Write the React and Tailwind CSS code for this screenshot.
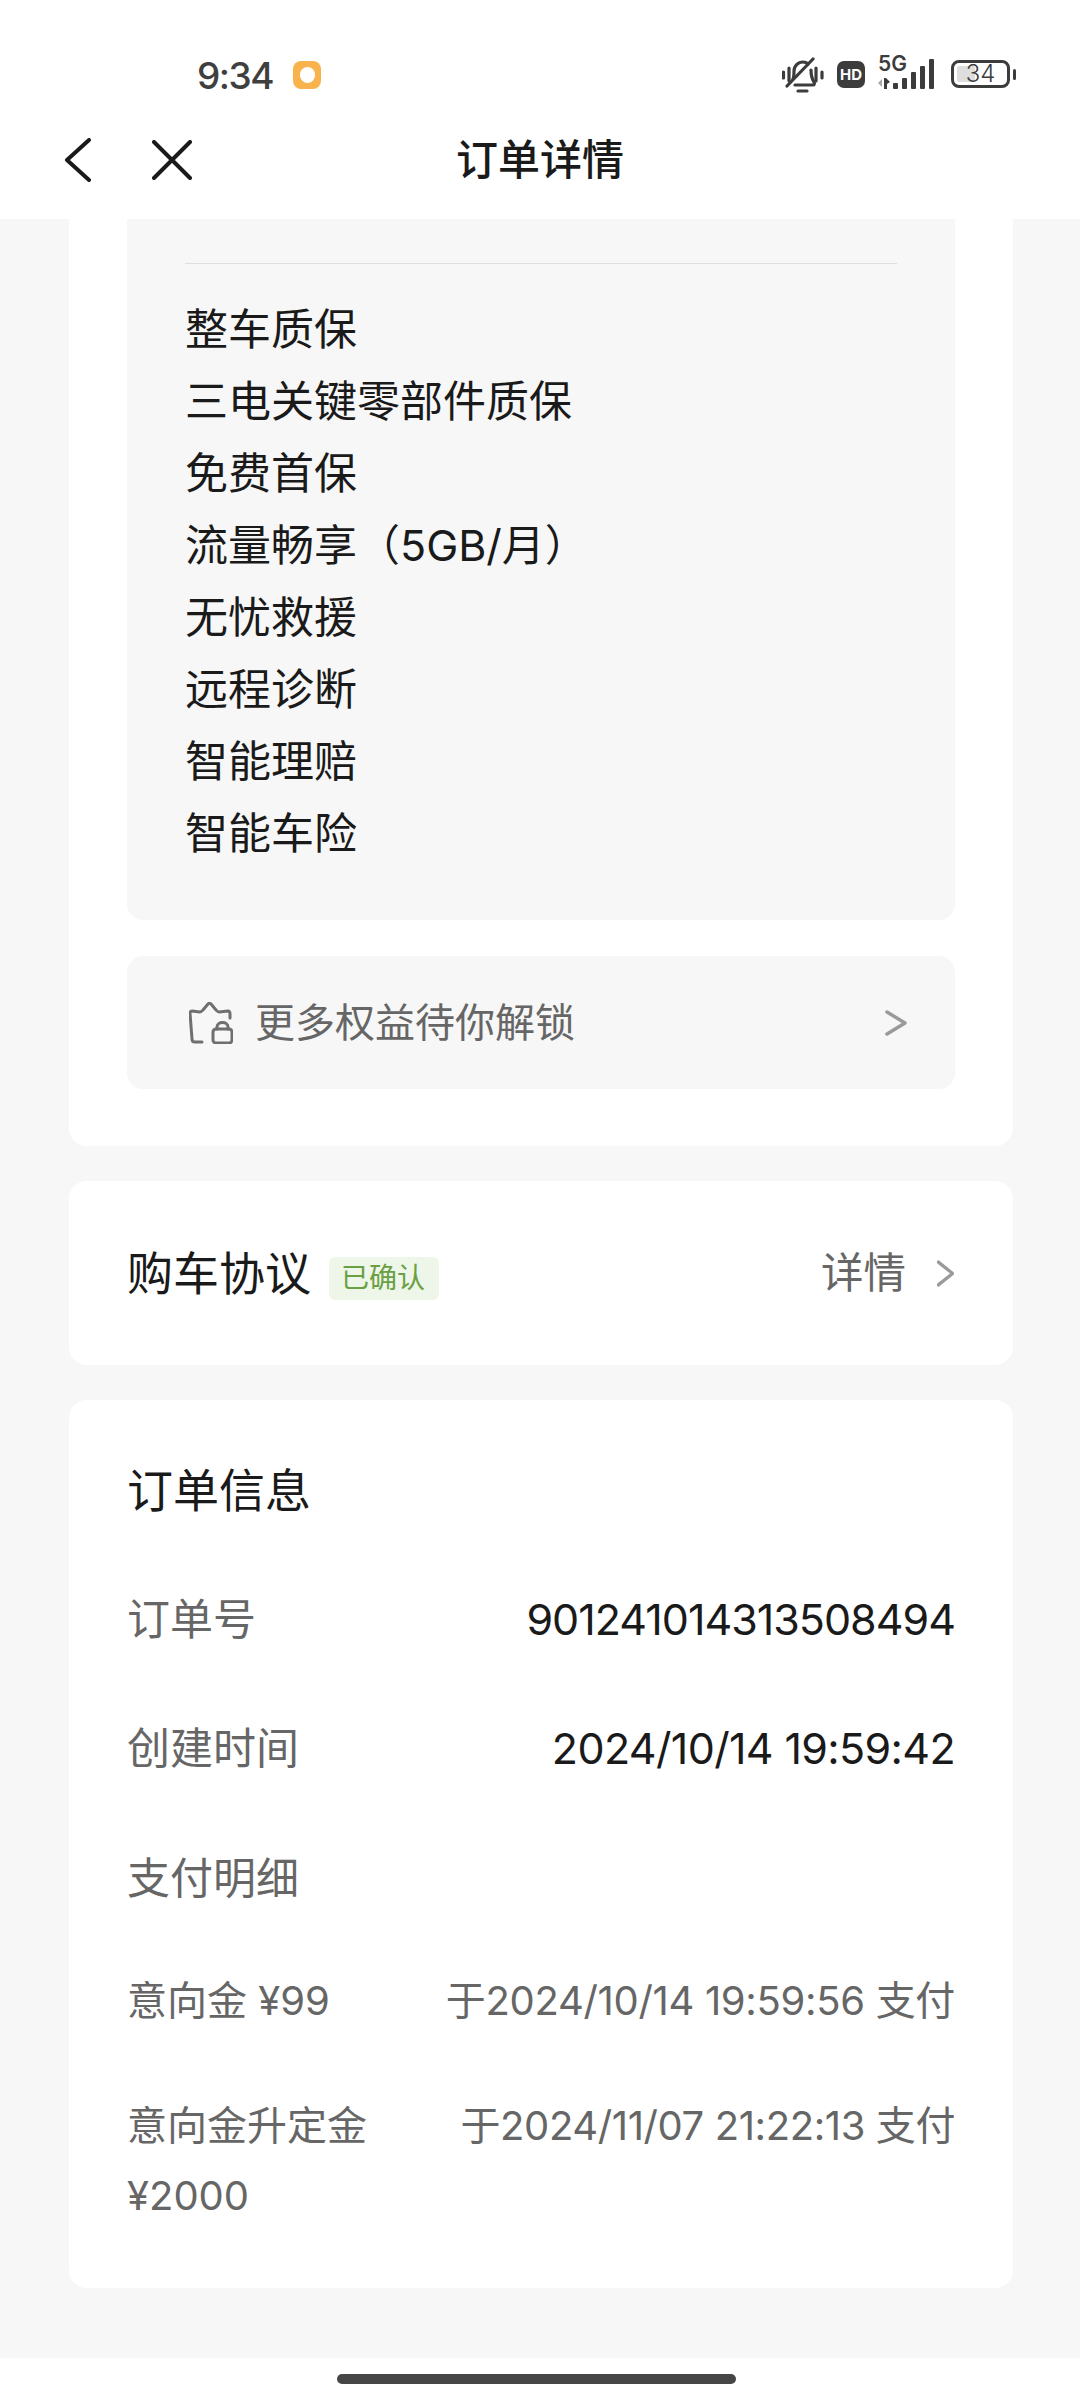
import React from 'react';

const benefits = ['整车质保', '三电关键零部件质保', '免费首保', '流量畅享（5GB/月）', '无忧救援', '远程诊断', '智能理赔', '智能车险'];

const BellOff = () => (
  <svg width="42" height="36" viewBox="0 0 42 36" fill="none" stroke="#3c3c3c" strokeWidth="3.200" strokeLinecap="round" strokeLinejoin="round">
    <path d="M1.500 15v6M7 11v13M34 11v13M40 15v6" />
    <path d="M11 22c1-2 1-5 1-8 0-5 4-9 9-9 2 0 4 1 5 2M29 13c0 5 1 9 3 12 1 2 0 3-1 3H13" />
    <path d="M31 2 5 29" />
    <path d="M16 34h9" />
  </svg>
);

const Signal = () => (
  <div className="w-[60px] h-[32px] relative">
    <span className="text-[21px] leading-[18px] font-semibold text-[#3c3c3c] absolute left-0 top-[-4px]">5G</span>
    <svg width="60" height="32" viewBox="0 0 60 32" fill="#3c3c3c">
      <path d="M0 24l4-4v8z" fill="#a8a8a8" />
      <path d="M6 19h2l4 4-3 2v5H6z" />
      <rect x="15" y="24" width="5" height="6" rx="1" />
      <rect x="24" y="19" width="5" height="11" rx="1" />
      <rect x="33" y="13" width="5" height="17" rx="1" />
      <rect x="42" y="7" width="5" height="23" rx="1" />
      <rect x="51" y="0" width="5" height="30" rx="1" />
    </svg>
  </div>
);

const Battery = () => (
  <div className="flex items-center gap-[3px]">
    <div className="w-[59px] h-[28px] rounded-[8px] border-[3px] border-[#3c3c3c] p-[3px] relative flex items-center">
      <div className="w-[18px] h-full bg-[#dedede] rounded-[2px]" />
      <span className="absolute inset-0 flex items-center justify-center text-[24px] leading-none text-[#3c3c3c] font-light">34</span>
    </div>
    <div className="w-[3px] h-[11px] bg-[#3c3c3c] rounded-full" />
  </div>
);

const Chevron = ({ className }) => (
  <svg className={className} viewBox="0 0 24 26" fill="none" stroke="#9a9a9a" strokeWidth="3.500" strokeLinecap="round" strokeLinejoin="round" preserveAspectRatio="none">
    <path d="M3 2l18 11L3 24" />
  </svg>
);

const InfoRow = ({ label, value, tracking }) => (
  <div className="flex justify-between text-[43px] leading-[72px]">
    <span className="text-[#666]">{label}</span>
    <span className={`text-[#1a1a1a] ${tracking}`}>{value}</span>
  </div>
);

export default function App() {
  return (
    <div className="w-[1080px] h-[2400px] flex flex-col bg-white overflow-hidden font-['Inter','Noto_Sans_CJK_SC',sans-serif]">
      {/* status bar + nav */}
      <header className="h-[219px] shrink-0 flex flex-col">
        <div className="h-[58px] mt-[57px] flex items-start justify-between pl-[197px] pr-[64px]">
          <div className="flex items-center h-[36px]">
            <span className="w-[96px] text-[37px] leading-none font-medium text-[#3f3f3f] tracking-[-1.5px]">9:34</span>
            <div className="w-[28px] h-[28px] rounded-[8px] bg-[#f9b34c] flex items-center justify-center">
              <div className="w-[15px] h-[16px] rounded-full bg-white" />
            </div>
          </div>
          <div className="flex items-start gap-[13px]">
            <BellOff />
            <div className="w-[28px] h-[27px] mt-[4px] rounded-[7px] bg-[#3c3c3c] text-white text-[15px] leading-[27px] font-bold text-center">HD</div>
            <div className="mt-[2px]"><Signal /></div>
            <div className="mt-[3px]"><Battery /></div>
          </div>
        </div>
        <nav className="relative flex items-center h-[50px] mt-[20px] pl-[64px]">
          <svg width="27" height="44" viewBox="0 0 27 44" fill="none" stroke="#1a1a1a" strokeWidth="4" strokeLinecap="round" strokeLinejoin="round">
            <path d="M25 2 3 22l22 20" />
          </svg>
          <svg className="ml-[61px]" width="40" height="40" viewBox="0 0 40 40" fill="none" stroke="#1a1a1a" strokeWidth="4" strokeLinecap="round">
            <path d="M2 2l36 36M38 2 2 38" />
          </svg>
          <h1 className="absolute inset-x-0 text-center text-[42px] leading-[50px] font-medium text-[#1a1a1a]">订单详情</h1>
        </nav>
      </header>

      <main className="flex-1 bg-[#f7f7f7] overflow-hidden">
        {/* benefits card, scrolled under the header */}
        <section className="ml-[69px] w-[944px] bg-white rounded-b-[18px] px-[58px] pb-[57px]">
          <div className="bg-[#f7f7f7] rounded-b-[16px] px-[58px] pt-[44px] pb-[51px]">
            <div className="h-px bg-[#dfdfdf] mb-[29px]" />
            <ul className="text-[43px] leading-[72px] text-[#1a1a1a]">
              {benefits.map((b) => (
                <li key={b}>{b}</li>
              ))}
            </ul>
          </div>
          <div className="mt-[36px] h-[133px] bg-[#f7f7f7] rounded-[16px] flex items-center pl-[62px] pr-[47px]">
            <svg width="44" height="42" viewBox="0 0 44 42" fill="none" stroke="#6f6f6f" strokeWidth="3" strokeLinecap="round" strokeLinejoin="round">
              <path d="M13 40H6c-2 0-3-1-3-3L1 11c0-1 1-2 2-2l8 1c1 0 2-1 3-2l5-6c1-1 2-1 3 0l5 6c1 1 2 2 3 2l9-1c1 0 2 1 2 3v4" />
              <rect x="24" y="27" width="19" height="14" rx="3" />
              <path d="M28 27v-2c0-6 11-6 11 0v2" />
            </svg>
            <span className="ml-[22px] text-[40px] text-[#666] flex-1">更多权益待你解锁</span>
            <Chevron className="w-[24px] h-[26px]" />
          </div>
        </section>

        {/* agreement */}
        <section className="ml-[69px] w-[944px] mt-[35px] h-[184px] bg-white rounded-[18px] flex items-center justify-between px-[58px]">
          <div className="flex items-center">
            <span className="text-[46px] text-[#1a1a1a]">购车协议</span>
            <span className="ml-[18px] mt-[10px] pl-[12px] pr-[14px] h-[43px] bg-[#edf6e8] rounded-[6px] text-[28px] leading-[43px] text-[#6aa043]">已确认</span>
          </div>
          <div className="flex items-center">
            <span className="text-[42.500px] text-[#666]">详情</span>
            <Chevron className="ml-[30px] w-[19px] h-[27px]" />
          </div>
        </section>

        {/* order info */}
        <section className="ml-[69px] w-[944px] mt-[35px] bg-white rounded-[18px] px-[58px] pt-[54px] pb-[57px] flex flex-col gap-[57px]">
          <h2 className="text-[46px] leading-[72px] text-[#1a1a1a]">订单信息</h2>
          <InfoRow label="订单号" value="901241014313508494" tracking="tracking-[-0.023em]" />
          <InfoRow label="创建时间" value="2024/10/14 19:59:42" tracking="tracking-[-0.015em]" />
          <div className="text-[43px] leading-[72px] text-[#666] translate-y-[1px]">支付明细</div>
          <div className="flex flex-col gap-[55px] text-[40px] leading-[70px] text-[#666] -mt-[4px]">
            <div className="flex justify-between">
              <span>意向金 ¥99</span>
              <span className="tracking-[-0.008em]">于2024/10/14 19:59:56 支付</span>
            </div>
            <div className="flex justify-between">
              <span className="w-[250px]">意向金升定金 ¥2000</span>
              <span className="tracking-[-0.01em]">于2024/11/07 21:22:13 支付</span>
            </div>
          </div>
        </section>
      </main>

      <footer className="h-[42px] shrink-0 flex justify-center pt-[16px] pr-[7px]">
        <div className="w-[399px] h-[10px] rounded-full bg-[#464646]" />
      </footer>
    </div>
  );
}
